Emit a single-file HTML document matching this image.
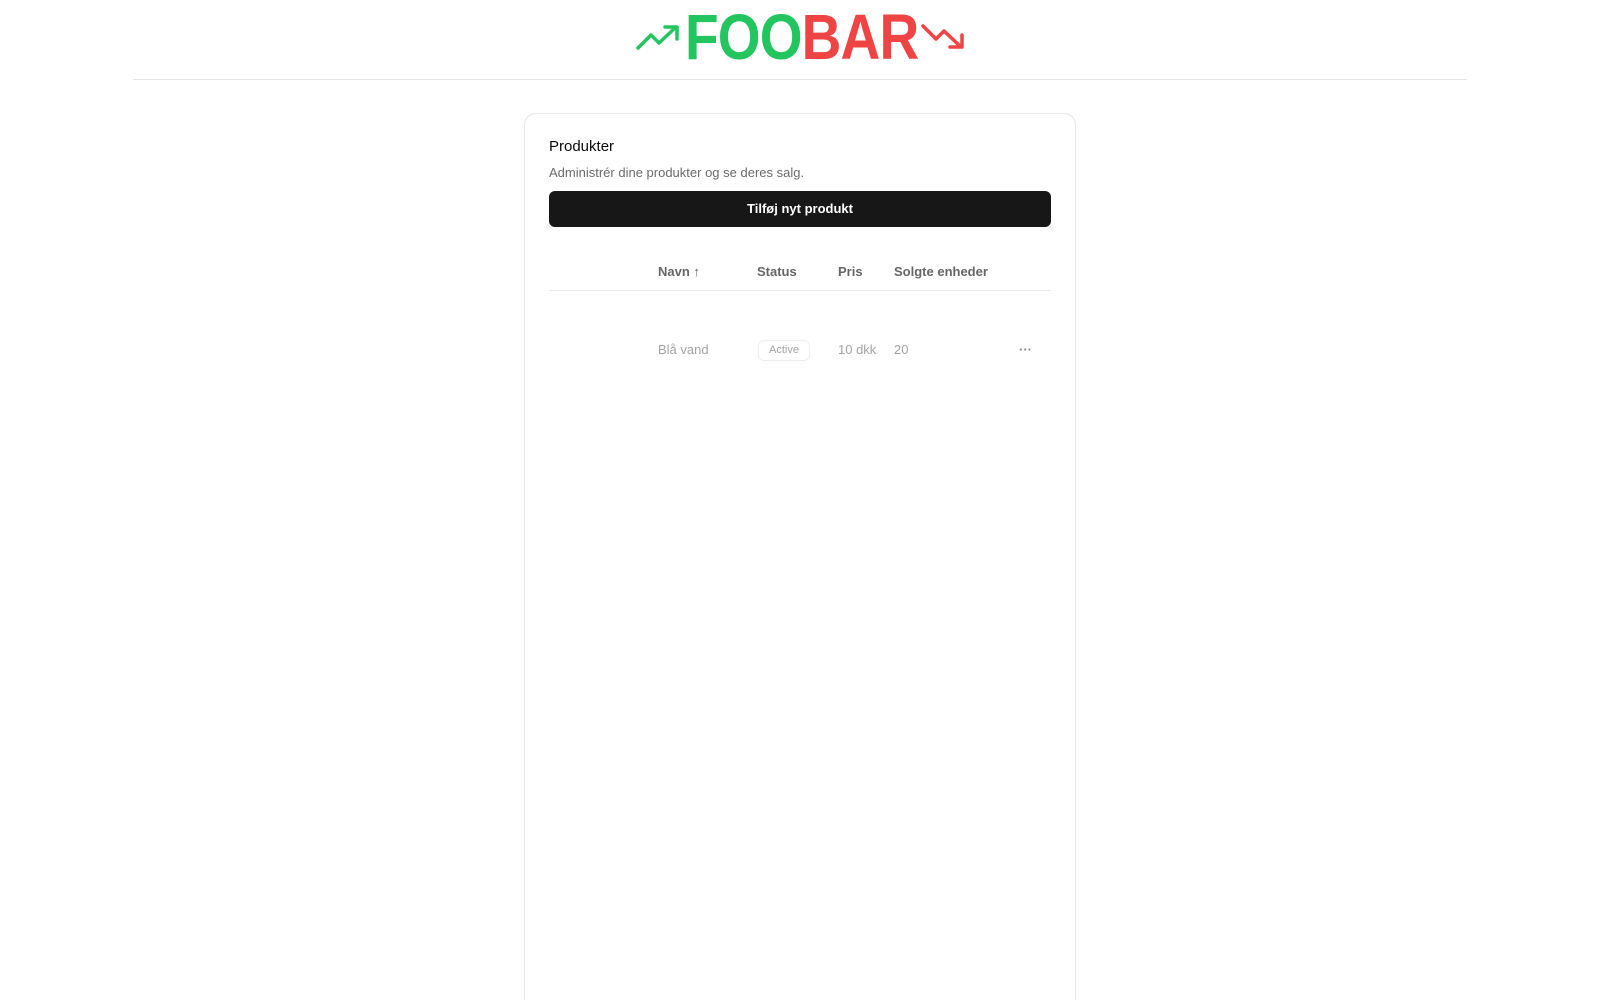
<!DOCTYPE html>
<html><head><meta charset="utf-8"><style>
*{box-sizing:border-box;margin:0;padding:0}
html,body{width:1600px;height:1000px;overflow:hidden}
body{background:#fff;font-family:"Liberation Sans",sans-serif;position:relative}
.abs{position:absolute}
.t{left:685px;top:2px;font-weight:bold;font-size:64px;line-height:70px;white-space:nowrap;transform:scaleX(0.86);transform-origin:0 0;letter-spacing:-1px}
.hr{left:133px;width:1334px;top:79px;height:1px;background:#e5e7eb}
.card{left:524px;top:113px;width:552px;height:887px;border:1px solid #e5e7eb;border-bottom:none;border-radius:12px 12px 0 0}
.h{font-size:15px;color:#0a0a0a;left:24px;top:24px}
.sub{font-size:13px;color:#6b6b6b;left:24px;top:51px}
.btn{left:24px;top:77px;width:502px;height:36px;background:#171717;border-radius:6px;color:#fff;font-weight:bold;font-size:13px;text-align:center;line-height:36px}
.th{font-size:13px;color:#666;font-weight:bold;top:150px}
.line{left:24px;width:502px;top:176px;height:1px;background:#e5e7eb}
.td{font-size:13px;color:#a3a3a3;top:228px}
.badge{left:233px;top:226px;width:52px;height:21px;border:1px solid #eee;border-radius:6px;font-size:11px;color:#a3a3a3;text-align:center;line-height:19px}
</style></head><body>
<svg class="abs" style="left:635px;top:22px" width="46" height="30" viewBox="0 0 46 30"><path d="M3 26 L16 13 L24 21 L41 5 M30 5 H42 V17" fill="none" stroke="#22c55e" stroke-width="3.5" stroke-linecap="round" stroke-linejoin="round"/></svg>
<div class="abs t"><span style="color:#22c55e">FOO</span><span style="color:#ef4444">BAR</span></div>
<svg class="abs" style="left:920px;top:22px" width="46" height="30" viewBox="0 0 46 30"><path d="M3 4 L16 17 L24 9 L41 25 M42 13 V25 H30" fill="none" stroke="#ef4444" stroke-width="3.5" stroke-linecap="round" stroke-linejoin="round"/></svg>
<div class="abs hr"></div>
<div class="abs card">
<div class="abs h">Produkter</div>
<div class="abs sub">Administrér dine produkter og se deres salg.</div>
<div class="abs btn">Tilføj nyt produkt</div>
<div class="abs th" style="left:133px">Navn ↑</div>
<div class="abs th" style="left:232px">Status</div>
<div class="abs th" style="left:313px">Pris</div>
<div class="abs th" style="left:369px">Solgte enheder</div>
<div class="abs line"></div>
<div class="abs td" style="left:133px">Blå vand</div>
<div class="abs badge">Active</div>
<div class="abs td" style="left:313px">10 dkk</div>
<div class="abs td" style="left:369px">20</div>
<div class="abs td" style="left:494px;top:228px;color:#888;font-weight:bold">···</div>
</div>
</body></html>
